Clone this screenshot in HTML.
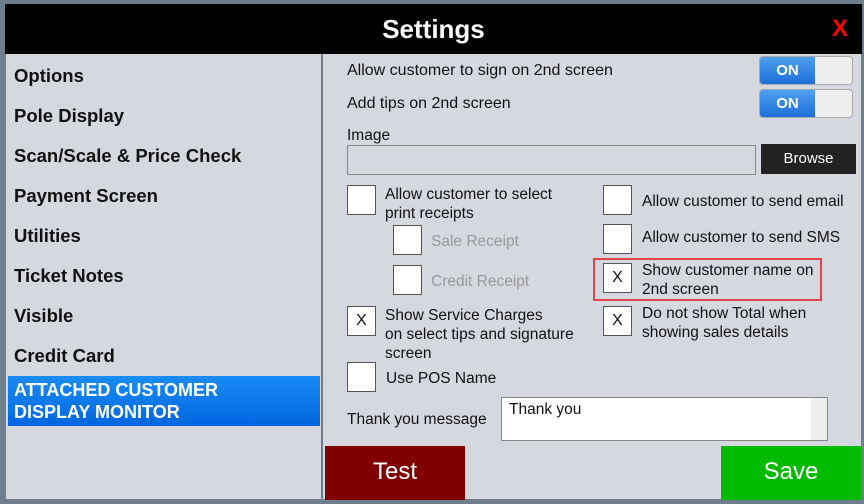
<!DOCTYPE html>
<html><head><style>
*{margin:0;padding:0;box-sizing:border-box}
body{width:864px;height:504px;background:#6f7e8c;position:relative;overflow:hidden;font-family:"Liberation Sans",sans-serif;color:#111}
.a{position:absolute}
.hdr{left:5px;top:4px;width:857px;height:50px;background:#000;color:#fff;font-weight:bold;font-size:26px;text-align:center;line-height:50px}
.x{right:14px;top:0;color:#f00;font-size:24px;font-weight:bold}
.left{left:6px;top:54px;width:316px;height:445px;background:#d5d8df;border-right:1px solid #777}
.right{left:323px;top:54px;width:538px;height:445px;background:#d5d8df}
.m{position:absolute;left:8px;font-weight:bold;font-size:18.5px}
.sel{position:absolute;left:2px;top:322px;width:312px;height:50px;background:linear-gradient(#1a8cf5,#0066e0);color:#fff;font-weight:bold;font-size:18px;line-height:22px;padding:3px 6px}
.t{position:absolute;font-size:15.5px;line-height:19px}
.cb{position:absolute;width:29px;height:30px;background:#fff;border:1px solid #555;text-align:center;line-height:28px;font-size:16px}
.tg{position:absolute;width:94px;height:29px;border-radius:4px;background:#eee;border:1px solid #aaa}
.tg .on{position:absolute;left:0;top:0;width:55px;height:27px;background:linear-gradient(#4fa0f0,#1d6fd8);color:#fff;font-weight:bold;font-size:15px;line-height:27px;text-align:center;border-radius:3px 0 0 3px}
</style></head><body>
<div class="a hdr">Settings<span class="a x">X</span></div>
<div class="a left">
<div class="m" style="top:11px">Options</div>
<div class="m" style="top:51px">Pole Display</div>
<div class="m" style="top:91px">Scan/Scale &amp; Price Check</div>
<div class="m" style="top:131px">Payment Screen</div>
<div class="m" style="top:171px">Utilities</div>
<div class="m" style="top:211px">Ticket Notes</div>
<div class="m" style="top:251px">Visible</div>
<div class="m" style="top:291px">Credit Card</div>
<div class="sel">ATTACHED CUSTOMER<br>DISPLAY MONITOR</div>
</div>
<div class="a right"></div>
<div class="t" style="left:347px;top:61px;font-size:16px">Allow customer to sign on 2nd screen</div>
<div class="tg" style="left:759px;top:56px"><div class="on">ON</div></div>
<div class="t" style="left:347px;top:94px;font-size:16px">Add tips on 2nd screen</div>
<div class="tg" style="left:759px;top:89px"><div class="on">ON</div></div>
<div class="t" style="left:347px;top:126px">Image</div>
<div class="a" style="left:347px;top:145px;width:409px;height:30px;border:1px solid #888;background:#d5d8df"></div>
<div class="a" style="left:761px;top:144px;width:95px;height:30px;background:#222;color:#fff;font-size:15px;text-align:center;line-height:30px">Browse</div>
<div class="cb" style="left:347px;top:185px"></div>
<div class="t" style="left:385px;top:185px">Allow customer to select<br>print receipts</div>
<div class="cb" style="left:393px;top:225px"></div>
<div class="t" style="left:431px;top:232px;color:#999">Sale Receipt</div>
<div class="cb" style="left:393px;top:265px"></div>
<div class="t" style="left:431px;top:272px;color:#999">Credit Receipt</div>
<div class="cb" style="left:603px;top:185px"></div>
<div class="t" style="left:642px;top:192px">Allow customer to send email</div>
<div class="cb" style="left:603px;top:224px"></div>
<div class="t" style="left:642px;top:228px">Allow customer to send SMS</div>
<div class="a" style="left:593px;top:258px;width:229px;height:43px;border:2px solid #e5434a"></div>
<div class="cb" style="left:603px;top:263px">X</div>
<div class="t" style="left:642px;top:261px">Show customer name on<br>2nd screen</div>
<div class="cb" style="left:347px;top:306px">X</div>
<div class="t" style="left:385px;top:306px">Show Service Charges<br>on select tips and signature<br>screen</div>
<div class="cb" style="left:603px;top:306px">X</div>
<div class="t" style="left:642px;top:304px">Do not show Total when<br>showing sales details</div>
<div class="cb" style="left:347px;top:362px"></div>
<div class="t" style="left:386px;top:369px">Use POS Name</div>
<div class="t" style="left:347px;top:410px">Thank you message</div>
<div class="a" style="left:501px;top:397px;width:327px;height:44px;background:#fff;border:1px solid #888;font-size:15.5px;padding:3px 7px">Thank you<div class="a" style="right:0;top:0;width:16px;height:42px;background:#eee"></div></div>
<div class="a" style="left:325px;top:446px;width:140px;height:54px;background:#800000;color:#fff;font-size:24px;text-align:center;line-height:52px">Test</div>
<div class="a" style="left:721px;top:446px;width:140px;height:54px;background:#00bb00;color:#fff;font-size:24px;text-align:center;line-height:52px">Save</div>
</body></html>
